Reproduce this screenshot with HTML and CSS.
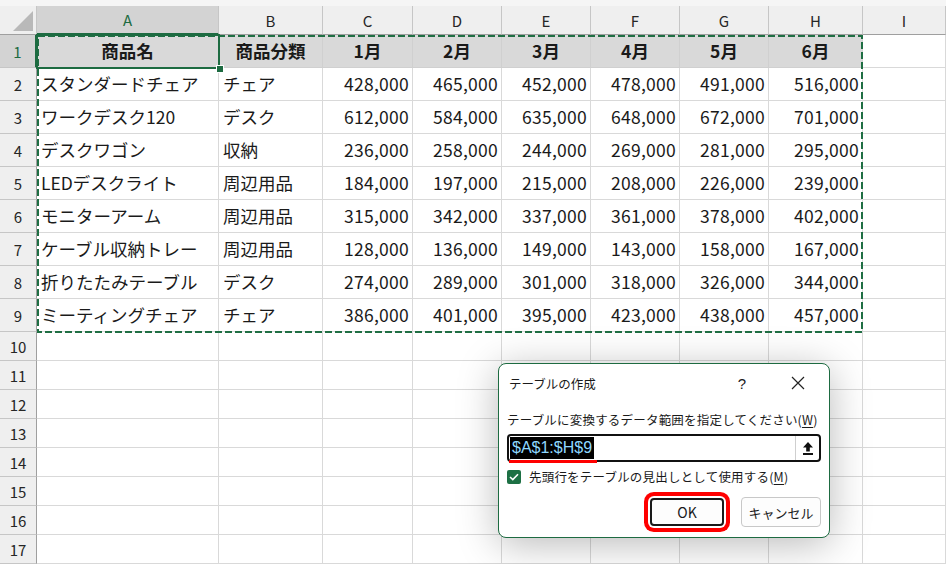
FILE: index.html
```html
<!DOCTYPE html>
<html lang="ja">
<head>
    <meta charset="UTF-8">
    <meta name="viewport" content="width=device-width, initial-scale=1.0">
    <title>テーブルの作成</title>
    <link rel="stylesheet" href="styles.css">
</head>
<body>
    <div class="sheet">
        <div class="top-band"></div>
        <div class="grid">
            <!-- column headers -->
            <div class="corner"><span class="corner-tri"></span></div>
            <div class="col-head sel">A</div>
            <div class="col-head">B</div>
            <div class="col-head">C</div>
            <div class="col-head">D</div>
            <div class="col-head">E</div>
            <div class="col-head">F</div>
            <div class="col-head">G</div>
            <div class="col-head">H</div>
            <div class="col-head">I</div>

            <!-- row 1 -->
            <div class="row-head sel">1</div>
            <div class="cell head">商品名</div>
            <div class="cell head">商品分類</div>
            <div class="cell head">1月</div>
            <div class="cell head">2月</div>
            <div class="cell head">3月</div>
            <div class="cell head">4月</div>
            <div class="cell head">5月</div>
            <div class="cell head">6月</div>
            <div class="cell"></div>

            <div class="row-head">2</div>
            <div class="cell">スタンダードチェア</div>
            <div class="cell">チェア</div>
            <div class="cell num">428,000</div>
            <div class="cell num">465,000</div>
            <div class="cell num">452,000</div>
            <div class="cell num">478,000</div>
            <div class="cell num">491,000</div>
            <div class="cell num">516,000</div>
            <div class="cell"></div>

            <div class="row-head">3</div>
            <div class="cell">ワークデスク120</div>
            <div class="cell">デスク</div>
            <div class="cell num">612,000</div>
            <div class="cell num">584,000</div>
            <div class="cell num">635,000</div>
            <div class="cell num">648,000</div>
            <div class="cell num">672,000</div>
            <div class="cell num">701,000</div>
            <div class="cell"></div>

            <div class="row-head">4</div>
            <div class="cell">デスクワゴン</div>
            <div class="cell">収納</div>
            <div class="cell num">236,000</div>
            <div class="cell num">258,000</div>
            <div class="cell num">244,000</div>
            <div class="cell num">269,000</div>
            <div class="cell num">281,000</div>
            <div class="cell num">295,000</div>
            <div class="cell"></div>

            <div class="row-head">5</div>
            <div class="cell">LEDデスクライト</div>
            <div class="cell">周辺用品</div>
            <div class="cell num">184,000</div>
            <div class="cell num">197,000</div>
            <div class="cell num">215,000</div>
            <div class="cell num">208,000</div>
            <div class="cell num">226,000</div>
            <div class="cell num">239,000</div>
            <div class="cell"></div>

            <div class="row-head">6</div>
            <div class="cell">モニターアーム</div>
            <div class="cell">周辺用品</div>
            <div class="cell num">315,000</div>
            <div class="cell num">342,000</div>
            <div class="cell num">337,000</div>
            <div class="cell num">361,000</div>
            <div class="cell num">378,000</div>
            <div class="cell num">402,000</div>
            <div class="cell"></div>

            <div class="row-head">7</div>
            <div class="cell">ケーブル収納トレー</div>
            <div class="cell">周辺用品</div>
            <div class="cell num">128,000</div>
            <div class="cell num">136,000</div>
            <div class="cell num">149,000</div>
            <div class="cell num">143,000</div>
            <div class="cell num">158,000</div>
            <div class="cell num">167,000</div>
            <div class="cell"></div>

            <div class="row-head">8</div>
            <div class="cell">折りたたみテーブル</div>
            <div class="cell">デスク</div>
            <div class="cell num">274,000</div>
            <div class="cell num">289,000</div>
            <div class="cell num">301,000</div>
            <div class="cell num">318,000</div>
            <div class="cell num">326,000</div>
            <div class="cell num">344,000</div>
            <div class="cell"></div>

            <div class="row-head">9</div>
            <div class="cell">ミーティングチェア</div>
            <div class="cell">チェア</div>
            <div class="cell num">386,000</div>
            <div class="cell num">401,000</div>
            <div class="cell num">395,000</div>
            <div class="cell num">423,000</div>
            <div class="cell num">438,000</div>
            <div class="cell num">457,000</div>
            <div class="cell"></div>

            <!-- empty rows -->
            <div class="row-head">10</div>
            <div class="cell"></div><div class="cell"></div><div class="cell"></div><div class="cell"></div><div class="cell"></div><div class="cell"></div><div class="cell"></div><div class="cell"></div><div class="cell"></div>
            <div class="row-head">11</div>
            <div class="cell"></div><div class="cell"></div><div class="cell"></div><div class="cell"></div><div class="cell"></div><div class="cell"></div><div class="cell"></div><div class="cell"></div><div class="cell"></div>
            <div class="row-head">12</div>
            <div class="cell"></div><div class="cell"></div><div class="cell"></div><div class="cell"></div><div class="cell"></div><div class="cell"></div><div class="cell"></div><div class="cell"></div><div class="cell"></div>
            <div class="row-head">13</div>
            <div class="cell"></div><div class="cell"></div><div class="cell"></div><div class="cell"></div><div class="cell"></div><div class="cell"></div><div class="cell"></div><div class="cell"></div><div class="cell"></div>
            <div class="row-head">14</div>
            <div class="cell"></div><div class="cell"></div><div class="cell"></div><div class="cell"></div><div class="cell"></div><div class="cell"></div><div class="cell"></div><div class="cell"></div><div class="cell"></div>
            <div class="row-head">15</div>
            <div class="cell"></div><div class="cell"></div><div class="cell"></div><div class="cell"></div><div class="cell"></div><div class="cell"></div><div class="cell"></div><div class="cell"></div><div class="cell"></div>
            <div class="row-head">16</div>
            <div class="cell"></div><div class="cell"></div><div class="cell"></div><div class="cell"></div><div class="cell"></div><div class="cell"></div><div class="cell"></div><div class="cell"></div><div class="cell"></div>
            <div class="row-head">17</div>
            <div class="cell"></div><div class="cell"></div><div class="cell"></div><div class="cell"></div><div class="cell"></div><div class="cell"></div><div class="cell"></div><div class="cell"></div><div class="cell"></div>
        </div>

        <!-- copy range marching ants around A1:H9 -->
        <svg class="ants" width="826" height="298" viewBox="0 0 826 298">
            <rect x="1" y="1" width="824" height="296" fill="none" stroke="#1f6e43" stroke-width="2" stroke-dasharray="7 3"/>
        </svg>
        <div class="active-cell"><span class="fill-handle"></span></div>

        <div class="dialog">
            <div class="dialog-title">
                <span class="title-text">テーブルの作成</span>
                <span class="help">?</span>
                <svg class="close" width="14" height="14" viewBox="0 0 14 14">
                    <path d="M1 1 L13 13 M13 1 L1 13" stroke="#222" stroke-width="1.2" fill="none"/>
                </svg>
            </div>
            <div class="dialog-body">
                <div class="prompt">テーブルに変換するデータ範囲を指定してください(<u>W</u>)</div>
                <div class="range-box">
                    <span class="range-text"><span class="range-sel">$A$1:$H$9</span><span class="red-line"></span></span>
                    <span class="collapse-btn">
                        <svg width="10" height="13" viewBox="0 0 10 13">
                            <path d="M5 0 L10 5.5 H6.8 V9.5 H3.2 V5.5 H0 Z" fill="#111"/>
                            <rect x="0" y="11" width="10" height="2" fill="#111"/>
                        </svg>
                    </span>
                </div>
                <label class="check-row">
                    <span class="checkbox">
                        <svg width="10" height="8" viewBox="0 0 10 8">
                            <path d="M1 4 L3.8 6.6 L9 1.2" stroke="#fff" stroke-width="1.6" fill="none"/>
                        </svg>
                    </span>
                    <span class="check-label">先頭行をテーブルの見出しとして使用する(<u>M</u>)</span>
                </label>
                <div class="buttons">
                    <button class="btn btn-ok">OK</button>
                    <button class="btn btn-cancel">キャンセル</button>
                </div>
            </div>
        </div>
    </div>
</body>
</html>
```

FILE: styles.css
```css
body {
    margin: 0;
    padding: 0;
    background: #fff;
    font-family: "Noto Sans CJK JP", "Noto Sans", sans-serif;
    color: #1a1a1a;
    overflow: hidden;
}

.sheet {
    position: relative;
    width: 946px;
    height: 564px;
    overflow: hidden;
}

.top-band {
    height: 6px;
    background: #f5f5f5;
}

.grid {
    display: grid;
    grid-template-columns: 37px 182px 104px 90px 89px 89px 89px 89px 94px 1fr;
    grid-template-rows: 29px repeat(9, 33px) repeat(8, 29px);
}

.grid > div {
    box-sizing: border-box;
    display: flex;
    align-items: center;
    line-height: 1;
    white-space: nowrap;
    overflow: hidden;
}

.corner {
    background: #efefef;
    border-right: 1px solid #c6c6c6;
    border-bottom: 1px solid #9f9f9f;
    position: relative;
}

.corner-tri {
    position: absolute;
    right: 3px;
    bottom: 3px;
    width: 0;
    height: 0;
    border-left: 20px solid transparent;
    border-bottom: 20px solid #b9b9b9;
}

.col-head {
    justify-content: center;
    background: #efefef;
    border-right: 1px solid #c6c6c6;
    border-bottom: 1px solid #9f9f9f;
    font-size: 15px;
    color: #262626;
}

.col-head.sel {
    background: #d3d3d3;
    color: #1d6b41;
    border-bottom: 2px solid #1d6b41;
}

.row-head {
    justify-content: center;
    background: #efefef;
    border-right: 1px solid #9f9f9f;
    border-bottom: 1px solid #c6c6c6;
    font-size: 15px;
    color: #262626;
}

.row-head.sel {
    background: #d3d3d3;
    color: #1d6b41;
    border-right: 2px solid #1d6b41;
}

.cell {
    border-right: 1px solid #d9d9d9;
    border-bottom: 1px solid #d9d9d9;
    font-size: 17.5px;
    padding-left: 4px;
    color: #1a1a1a;
}

.cell.head {
    background: #d9d9d9;
    border-color: #d0d0d0;
    justify-content: center;
    font-weight: bold;
    padding-left: 0;
}

.cell.num {
    justify-content: flex-end;
    padding-left: 0;
    padding-right: 3px;
    letter-spacing: 0.25px;
}

.ants {
    position: absolute;
    left: 37px;
    top: 35px;
}

.active-cell {
    position: absolute;
    left: 36px;
    top: 34px;
    width: 180px;
    height: 31px;
    border: 2px solid #1d6b41;
}

.fill-handle {
    position: absolute;
    right: -6px;
    bottom: -6px;
    width: 6px;
    height: 6px;
    background: #1d6b41;
    border: 1px solid #fff;
}

/* dialog */
.dialog {
    position: absolute;
    left: 498px;
    top: 363px;
    width: 332px;
    height: 175px;
    box-sizing: border-box;
    background: #fff;
    border: 1px solid #1d6b41;
    border-radius: 8px;
    box-shadow: 0 6px 40px rgba(0, 0, 0, 0.28);
    font-size: 12.5px;
    color: #1a1a1a;
}

.dialog-title {
    display: flex;
    align-items: center;
    height: 38px;
    padding-left: 10px;
}

.title-text {
    flex: 1;
}

.help {
    width: 14px;
    text-align: center;
    font-family: "Liberation Sans", sans-serif;
    font-size: 15px;
    margin-right: 42px;
}

.close {
    margin-right: 24px;
}

.dialog-body {
    padding: 10px 8px 0 8px;
}

.prompt {
    line-height: 16px;
    letter-spacing: 0.2px;
}

.prompt u,
.check-row u {
    text-underline-offset: 2px;
}

.range-box {
    margin-top: 6px;
    height: 28px;
    box-sizing: border-box;
    border: 2px solid #111;
    border-radius: 4px;
    display: flex;
    align-items: center;
}

.range-text {
    flex: 1;
    position: relative;
    height: 100%;
    display: flex;
    align-items: center;
    padding-left: 1px;
}

.range-sel {
    background: #000;
    color: #8fd8ff;
    font-family: "Liberation Sans", sans-serif;
    font-size: 16px;
    line-height: 22px;
    padding: 0 2px;
}

.red-line {
    position: absolute;
    left: 0;
    bottom: -3px;
    width: 88px;
    height: 3px;
    background: #ff0000;
}

.collapse-btn {
    width: 23px;
    height: 100%;
    border-left: 1px solid #cfcfcf;
    display: flex;
    align-items: center;
    justify-content: center;
}

.check-row {
    display: flex;
    align-items: center;
    gap: 8px;
    margin-top: 7px;
    line-height: 16px;
}

.check-label {
    letter-spacing: 0.2px;
}

.checkbox {
    width: 14px;
    height: 14px;
    background: #1d7044;
    border-radius: 2px;
    display: flex;
    align-items: center;
    justify-content: center;
}

.buttons {
    display: flex;
    justify-content: flex-end;
    align-items: center;
    gap: 17px;
    margin-top: 12px;
}

.btn {
    font-family: "Noto Sans CJK JP", "Noto Sans", sans-serif;
    font-size: 13px;
    color: #1a1a1a;
    background: #fdfdfd;
    cursor: pointer;
    padding: 0;
}

.btn-ok {
    width: 74px;
    height: 28px;
    border: 2px solid #1a1a1a;
    border-radius: 4px;
    font-size: 14px;
    box-shadow: 0 0 0 2px #fff, 0 0 0 6px #ff0000;
}

.btn-cancel {
    width: 80px;
    height: 30px;
    border: 1px solid #c8c8c8;
    border-radius: 4px;
}
```
